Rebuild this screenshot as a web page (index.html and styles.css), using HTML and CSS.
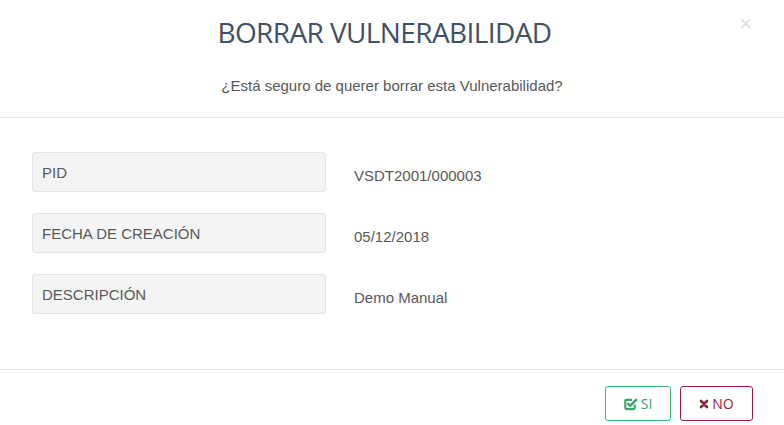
FILE: index.html
```html
<!DOCTYPE html>
<html lang="es">
<head>
<meta charset="utf-8">
<title>Borrar Vulnerabilidad</title>
<link rel="stylesheet" href="styles.css">
</head>
<body>
<div class="modal">
  <div class="modal-header">
    <button class="close" type="button">&times;</button>
    <h2 class="title">BORRAR VULNERABILIDAD</h2>
    <p class="subtitle">¿Está seguro de querer borrar esta Vulnerabilidad?</p>
  </div>
  <div class="modal-body">
    <div class="row">
      <div class="label-box">PID</div>
      <div class="value">VSDT2001/000003</div>
    </div>
    <div class="row">
      <div class="label-box">FECHA DE CREACIÓN</div>
      <div class="value">05/12/2018</div>
    </div>
    <div class="row">
      <div class="label-box">DESCRIPCIÓN</div>
      <div class="value">Demo Manual</div>
    </div>
  </div>
  <div class="modal-footer">
    <button class="btn btn-si" type="button">
      <svg class="ico" viewBox="0 0 14 14" width="14" height="14" aria-hidden="true">
        <path d="M10.8 7.4v3.4a1.3 1.3 0 0 1-1.3 1.3H2.6a1.3 1.3 0 0 1-1.3-1.3V4.1A1.3 1.3 0 0 1 2.6 2.8h5.4" fill="none" stroke="currentColor" stroke-width="2.2"/>
        <path d="M3.6 6.2l2.6 2.6 6.6-6.6" fill="none" stroke="currentColor" stroke-width="2.5"/>
      </svg>SI
    </button>
    <button class="btn btn-no" type="button">
      <svg class="ico" viewBox="0 0 10 10" width="10" height="10" aria-hidden="true">
        <path d="M2 2l6 6M8 2l-6 6" fill="none" stroke="currentColor" stroke-width="2.6" stroke-linecap="round"/>
      </svg>NO
    </button>
  </div>
</div>
</body>
</html>
```
FILE: styles.css
```css
* { box-sizing: border-box; }
html, body { margin: 0; padding: 0; background: #fff; }
body {
  font-family: "Liberation Sans", Arial, sans-serif;
  font-size: 15px;
  color: #585858;
}
.modal { width: 784px; height: 425px; background: #fff; }
.modal-header {
  position: relative;
  height: 118px;
  border-bottom: 1px solid #e5e5e5;
  text-align: center;
  padding-top: 13px;
}
.close {
  position: absolute;
  top: 13px;
  right: 32px;
  border: 0;
  background: none;
  padding: 0;
  font-family: "Liberation Sans", Arial, sans-serif;
  font-size: 22px;
  line-height: 22px;
  color: #dcdcdc;
}
.title {
  margin: 0;
  padding-right: 15px;
  font-family: "Open Sans", sans-serif;
  font-weight: 400;
  font-size: 28px;
  line-height: 38px;
  color: #3e5064;
  letter-spacing: -0.6px;
}
.subtitle {
  margin: 26px 0 0;
  font-size: 15px;
  line-height: 18px;
}
.modal-body {
  padding: 34px 32px 0;
  height: 252px;
  border-bottom: 1px solid #e5e5e5;
  display: flex;
  flex-direction: column;
  gap: 21px;
}
.row { display: flex; align-items: center; gap: 28px; }
.label-box {
  width: 294px;
  height: 40px;
  background: #f4f4f4;
  border: 1px solid #e4e4e4;
  border-radius: 3px;
  padding: 0 9px;
  display: flex;
  align-items: center;
  font-size: 15px;
}
.value { font-size: 15px; padding-top: 6px; }
.modal-footer {
  display: flex;
  justify-content: flex-end;
  gap: 9px;
  padding: 16px 31px 0 0;
}
.btn {
  height: 35px;
  background: #fff;
  border: 1px solid;
  border-radius: 3px;
  font-family: "Open Sans", sans-serif;
  font-size: 14px;
  display: flex;
  align-items: center;
  justify-content: center;
  gap: 3px;
  padding: 0;
}
.btn-si { width: 66px; border-color: #3fb26f; color: #3aa865; }
.btn-no { width: 73px; border-color: #8e2338; color: #8e2338; }
.ico { display: block; }
```
